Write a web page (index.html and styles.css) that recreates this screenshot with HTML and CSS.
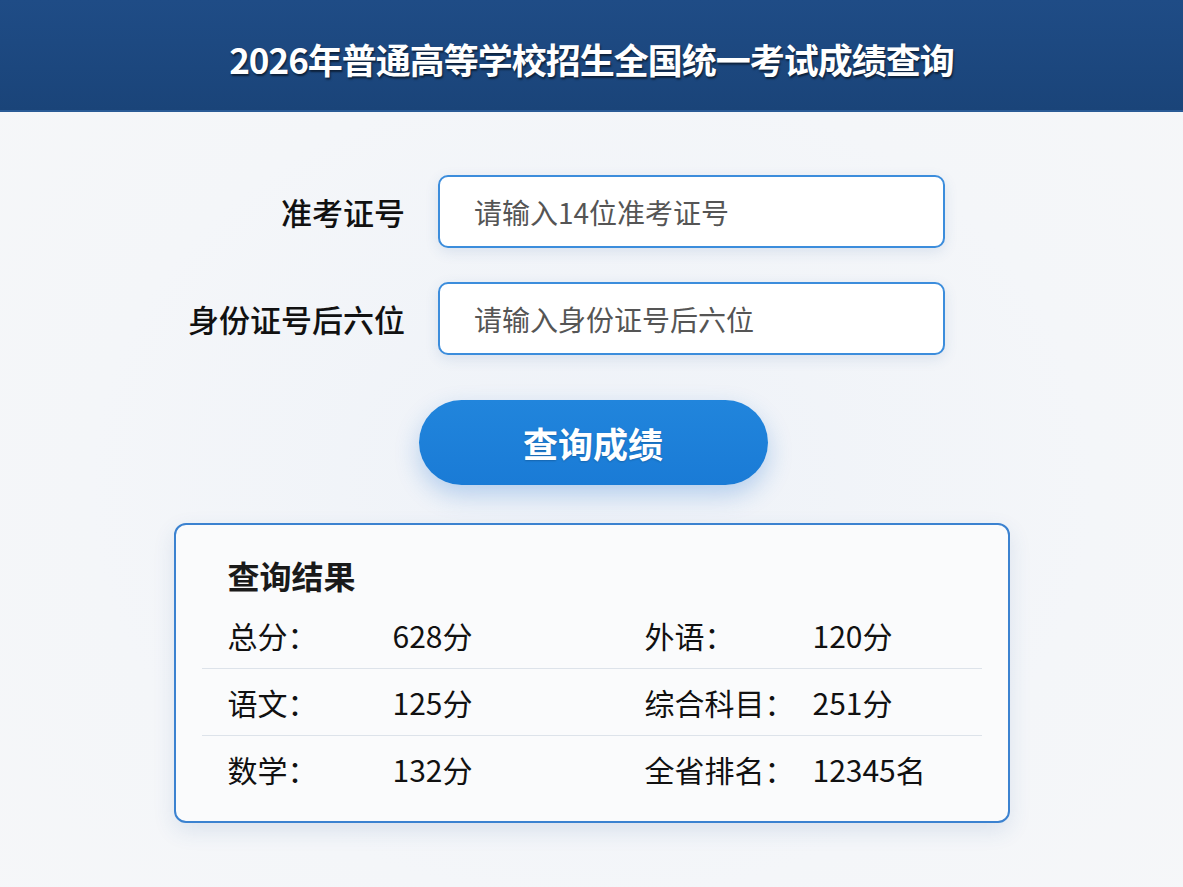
FILE: index.html
```html
<!DOCTYPE html>
<html lang="zh-CN">
<head>
  <meta charset="UTF-8" />
  <meta name="viewport" content="width=device-width, initial-scale=1.0"/>
  <title>2026年普通高等学校招生全国统一考试成绩查询</title>
  <link rel="stylesheet" href="styles.css">
</head>
<body>

  <header>
    <h1>2026年普通高等学校招生全国统一考试成绩查询</h1>
  </header>

  <main class="container">
    <form class="query-form" onsubmit="return false">
      <label for="examNo">准考证号</label>
      <input id="examNo" type="text" placeholder="请输入14位准考证号">

      <label for="idTail">身份证号后六位</label>
      <input id="idTail" type="text" placeholder="请输入身份证号后六位">
    </form>

    <div class="actions">
      <button class="query-btn" type="button">查询成绩</button>
    </div>

    <section class="result-card">
      <h2>查询结果</h2>
      <div class="result-list">
        <div class="result-row">
          <span>总分：</span><span>628分</span>
          <span>外语：</span><span>120分</span>
        </div>
        <div class="result-row">
          <span>语文：</span><span>125分</span>
          <span>综合科目：</span><span>251分</span>
        </div>
        <div class="result-row">
          <span>数学：</span><span>132分</span>
          <span>全省排名：</span><span>12345名</span>
        </div>
      </div>
    </section>
  </main>

</body>
</html>
```

FILE: styles.css
```css
* {
  box-sizing: border-box;
}
body {
  font-family: "Noto Sans CJK SC", "Noto Sans", sans-serif;
  margin: 0;
  min-height: 887px;
  background: radial-gradient(ellipse at 50% 55%, #eef2f8 0%, #f4f6f9 60%, #f6f7f9 100%);
  color: #1a1a1a;
}
header {
  height: 112px;
  display: flex;
  align-items: center;
  justify-content: center;
  background: linear-gradient(180deg, #1f4c86 0%, #1a4479 100%);
  border-bottom: 2px solid #2a5b96;
}
header h1 {
  margin: 0;
  padding-top: 6px;
  font-size: 35px;
  font-weight: 700;
  letter-spacing: -1px;
  color: #fff;
  text-shadow: 1px 2px 2px rgba(0, 0, 0, 0.55);
}
.container {
  padding-top: 63px;
}
.query-form {
  display: grid;
  grid-template-columns: 405px 507px;
  column-gap: 33px;
  row-gap: 34px;
  align-items: center;
}
.query-form label {
  text-align: right;
  font-size: 31px;
  font-weight: 500;
  color: #111;
}
.query-form input {
  height: 73px;
  padding: 0 34px;
  border: 2px solid #3c8ddc;
  border-radius: 10px;
  background: #fff;
  font-family: inherit;
  font-size: 28px;
  color: #333;
  box-shadow: 0 4px 14px rgba(40, 90, 160, 0.12);
}
.query-form input::placeholder {
  color: #555;
}
.actions {
  display: flex;
  justify-content: center;
  margin-top: 45px;
}
.query-btn {
  width: 349px;
  height: 85px;
  margin-left: 3px;
  border: none;
  border-radius: 43px;
  background: linear-gradient(180deg, #2185dc 0%, #1a7bd6 100%);
  color: #fff;
  font-family: inherit;
  font-size: 35px;
  font-weight: 700;
  cursor: pointer;
  box-shadow: 0 10px 24px rgba(30, 110, 210, 0.28);
  text-shadow: 0 1px 2px rgba(0, 0, 0, 0.2);
}
.result-card {
  width: 836px;
  margin: 38px auto 0;
  padding: 29px 26px 19px;
  border: 2px solid #3b82d0;
  border-radius: 12px;
  background: #fafbfc;
  box-shadow: 0 8px 22px rgba(40, 90, 160, 0.12);
}
.result-card h2 {
  margin: 0 0 6px 26px;
  font-size: 32px;
  line-height: 42px;
  font-weight: 700;
}
.result-row {
  display: grid;
  grid-template-columns: 165px 252px 168px 1fr;
  align-items: center;
  height: 66px;
  padding-left: 26px;
  font-size: 30px;
  color: #111;
}
.result-row + .result-row {
  border-top: 1px solid #dde3ea;
  height: 67px;
}
```
